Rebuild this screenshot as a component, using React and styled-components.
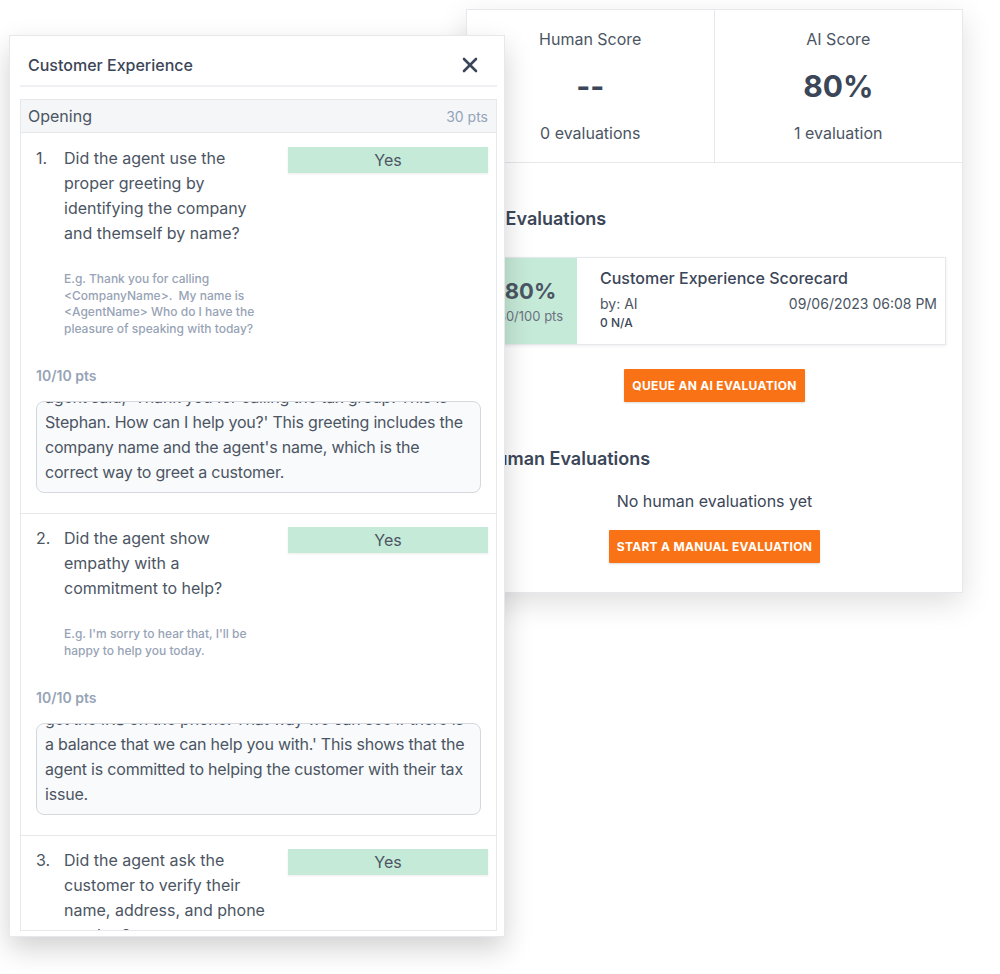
import styled, { createGlobalStyle } from "styled-components";
import { X } from "lucide-react";

// reason text is kept line by line so the visible part of the scrolled box matches
const questions = [
  {
    id: 1,
    text: "Did the agent use the proper greeting by identifying the company and themself by name?",
    example: "E.g. Thank you for calling <CompanyName>.  My name is <AgentName> Who do I have the pleasure of speaking with today?",
    points: "10/10 pts",
    reason: [
      "The agent used the proper greeting at the start of the",
      "call. The agent said, 'Thank you for calling the tax group.",
      "agent said, 'Thank you for calling the tax group. This is",
      "Stephan. How can I help you?' This greeting includes the",
      "company name and the agent's name, which is the",
      "correct way to greet a customer.",
    ],
  },
  {
    id: 2,
    text: "Did the agent show empathy with a commitment to help?",
    example: "E.g. I'm sorry to hear that, I'll be happy to help you today.",
    points: "10/10 pts",
    reason: [
      "The agent showed empathy and a commitment to help.",
      "The agent said, 'I understand, let's see if we can",
      "get the IRS on the phone. That way we can see if there is",
      "a balance that we can help you with.' This shows that the",
      "agent is committed to helping the customer with their tax",
      "issue.",
    ],
  },
  {
    id: 3,
    text: "Did the agent ask the customer to verify their name, address, and phone number?",
    example: "E.g. Can you please verify your name, address and phone number?",
    points: "10/10 pts",
    reason: null,
  },
];

export default function App() {
  return (
    <>
      <GlobalStyle />
      <Stage>
        <ScorePanel>
          <Stats>
            <Stat>
              <StatLabel>Human Score</StatLabel>
              <StatValue>--</StatValue>
              <StatLabel>0 evaluations</StatLabel>
            </Stat>
            <Stat>
              <StatLabel>AI Score</StatLabel>
              <StatValue>80%</StatValue>
              <StatLabel>1 evaluation</StatLabel>
            </Stat>
          </Stats>
          <PanelBody>
            <SectionTitle>AI Evaluations</SectionTitle>
            <EvalCard>
              <EvalScore>
                <strong>80%</strong>
                <span>80/100 pts</span>
              </EvalScore>
              <EvalInfo>
                <EvalTitle>Customer Experience Scorecard</EvalTitle>
                <EvalMeta>
                  <span>by: AI</span>
                  <span>09/06/2023 06:08 PM</span>
                </EvalMeta>
                <EvalNa>0 N/A</EvalNa>
              </EvalInfo>
            </EvalCard>
            <Centered>
              <OrangeButton>Queue an AI Evaluation</OrangeButton>
            </Centered>
            <SectionTitle $top={45}>Human Evaluations</SectionTitle>
            <EmptyText>No human evaluations yet</EmptyText>
            <Centered>
              <OrangeButton>Start a manual evaluation</OrangeButton>
            </Centered>
          </PanelBody>
        </ScorePanel>

        <ScorecardPanel>
          <PanelHeader>
            <h2>Customer Experience</h2>
            <X size={24} strokeWidth={2.6} color="#3b4658" />
          </PanelHeader>
          <ScrollArea>
            <GroupHeader>
              <span>Opening</span>
              <small>30 pts</small>
            </GroupHeader>
            {questions.map((q, i) => (
              <Question key={q.id} $first={i === 0}>
                <QuestionTop>
                  <Num>{q.id}.</Num>
                  <QuestionText>{q.text}</QuestionText>
                  <Answer>Yes</Answer>
                </QuestionTop>
                <Example>{q.example}</Example>
                <Points>{q.points}</Points>
                {q.reason && (
                  <Reason>
                    {q.reason.map((line, n) => (
                      <ReasonLine key={n}>{line}</ReasonLine>
                    ))}
                  </Reason>
                )}
              </Question>
            ))}
          </ScrollArea>
        </ScorecardPanel>
      </Stage>
    </>
  );
}

const GlobalStyle = createGlobalStyle`
    * { box-sizing: border-box; }
    body {
        margin: 0;
        background: #ffffff;
        font-family: Inter, "Noto Sans", sans-serif;
        color: #374151;
    }
`;

const Stage = styled.div`
    position: relative;
    width: 1000px;
    height: 974px;
    overflow: hidden;
    background: #ffffff;
`;

const ScorePanel = styled.div`
    position: absolute;
    left: 466px;
    top: 9px;
    width: 497px;
    height: 584px;

    background: #ffffff;
    border: 1px solid #e6e8ec;
    box-shadow: 0 10px 28px rgba(0, 0, 0, 0.13);
`;

const Stats = styled.div`
    display: grid;
    grid-template-columns: 1fr 1fr;
    border-bottom: 1px solid #e6e8ec;
`;

const Stat = styled.div`
    height: 152px;
    padding-top: 17px;

    display: flex;
    flex-direction: column;
    align-items: center;

    &:first-child {
        border-right: 1px solid #e6e8ec;
    }
`;

const StatLabel = styled.div`
    font-size: 16px;
    line-height: 24px;
    color: #4b5563;
`;

const StatValue = styled.div`
    margin: 17px 0 17px;
    font-size: 30px;
    line-height: 36px;
    font-weight: 700;
    color: #3b4658;
`;

const PanelBody = styled.div`
    padding: 0 16px;
`;

const SectionTitle = styled.h3`
    margin: ${p => p.$top ?? 44}px 0 0;
    font-size: 18px;
    line-height: 24px;
    font-weight: 600;
    color: #3b4658;
`;

const EvalCard = styled.div`
    margin-top: 26px;
    height: 88px;
    display: flex;

    border: 1px solid #e6e8ec;
    box-shadow: 0 1px 3px rgba(0, 0, 0, 0.08);
`;

const EvalScore = styled.div`
    width: 93px;
    background: #c6ead8;

    display: flex;
    flex-direction: column;
    align-items: center;
    justify-content: center;

    strong {
        font-size: 22px;
        line-height: 26px;
        font-weight: 700;
        color: #4b5563;
    }

    span {
        margin-top: 4px;
        font-size: 13px;
        line-height: 16px;
        color: #6b7280;
    }
`;

const EvalInfo = styled.div`
    flex: 1;
    padding: 9px 8px 0 23px;
`;

const EvalTitle = styled.div`
    font-size: 16px;
    line-height: 22px;
    font-weight: 500;
    color: #3b4658;
`;

const EvalMeta = styled.div`
    margin-top: 5px;
    display: flex;
    justify-content: space-between;
    font-size: 14px;
    line-height: 20px;
    color: #4b5563;
`;

const EvalNa = styled.div`
    font-size: 12px;
    line-height: 18px;
    font-weight: 500;
    color: #3b4658;
`;

const Centered = styled.div`
    display: flex;
    justify-content: center;
    margin-top: 24px;
`;

const OrangeButton = styled.button`
    height: 33px;
    padding: 0 8px;

    background: #f97316;
    border: none;
    border-radius: 1px;
    box-shadow: 0 1px 2px rgba(0, 0, 0, 0.15);

    font-family: Inter, "Noto Sans", sans-serif;
    font-size: 12px;
    font-weight: 700;
    letter-spacing: 0.3px;
    text-transform: uppercase;
    color: #ffffff;
`;

const EmptyText = styled.p`
    margin: 18px 0 -7px;
    text-align: center;
    font-size: 16px;
    line-height: 24px;
    color: #3b4658;
`;

const ScorecardPanel = styled.div`
    position: absolute;
    left: 9px;
    top: 35px;
    width: 496px;
    height: 902px;
    padding: 0 7px 5px 10px;

    display: flex;
    flex-direction: column;

    background: #ffffff;
    border: 1px solid #e6e8ec;
    box-shadow: 0 12px 26px rgba(0, 0, 0, 0.18);
`;

const PanelHeader = styled.div`
    height: 51px;
    padding: 9px 15px 0 8px;

    display: flex;
    align-items: center;
    justify-content: space-between;
    border-bottom: 2px solid #eef0f3;

    h2 {
        margin: 0;
        font-size: 16px;
        font-weight: 500;
        color: #3b4658;
    }
`;

const ScrollArea = styled.div`
    flex: 1;
    margin-top: 12px;
    overflow: hidden;
    border: 1px solid #e6e8ec;
`;

const GroupHeader = styled.div`
    height: 33px;
    padding: 0 8px 0 7px;

    display: flex;
    align-items: center;
    justify-content: space-between;

    background: #f5f6f8;
    border-bottom: 1px solid #e6e8ec;

    span {
        font-size: 16px;
        color: #4b5563;
    }

    small {
        font-size: 14px;
        color: #94a3b8;
    }
`;

const Question = styled.div`
    padding: ${p => (p.$first ? "13px" : "12px")} 8px 20px 15px;
    border-top: ${p => (p.$first ? "none" : "1px solid #e6e8ec")};
`;

const QuestionTop = styled.div`
    display: flex;
    align-items: flex-start;
`;

const Num = styled.span`
    width: 28px;
    flex-shrink: 0;
    font-size: 16px;
    line-height: 25px;
    color: #4b5563;
`;

const QuestionText = styled.div`
    width: 210px;
    font-size: 16px;
    line-height: 25px;
    color: #4b5563;
`;

const Answer = styled.div`
    margin-left: auto;
    margin-top: 1px;
    width: 200px;
    height: 26px;

    display: flex;
    align-items: center;
    justify-content: center;

    background: #c6ead8;
    box-shadow: 0 1px 2px rgba(0, 0, 0, 0.08);

    font-size: 16px;
    color: #4b5563;
`;

const Example = styled.p`
    margin: 25px 0 0 28px;
    width: 200px;
    font-size: 12px;
    line-height: 16.5px;
    font-weight: 500;
    color: #97a3b6;
    white-space: pre-wrap;
`;

const Points = styled.div`
    margin-top: 29px;
    font-size: 14px;
    line-height: 20px;
    font-weight: 600;
    color: #97a3b6;
`;

const Reason = styled.div`
    margin-top: 15px;
    width: 445px;
    height: 92px;
    padding: 0 8px 7px;
    overflow: hidden;

    display: flex;
    flex-direction: column;
    justify-content: flex-end;

    background: #f9fafb;
    border: 1px solid #d5d9df;
    border-radius: 8px;
`;

const ReasonLine = styled.span`
    display: block;
    flex-shrink: 0;
    white-space: nowrap;
    font-size: 16px;
    line-height: 25px;
    letter-spacing: -0.2px;
    color: #4b5563;
`;
